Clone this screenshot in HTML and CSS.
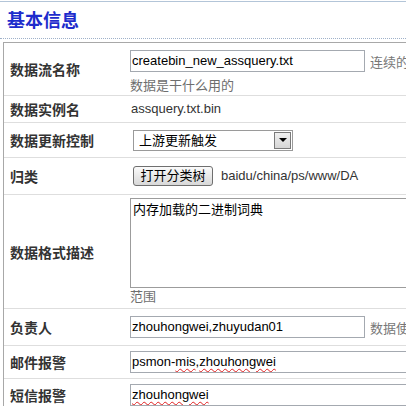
FILE: index.html
```html
<!DOCTYPE html>
<html lang="zh">
<head>
<meta charset="utf-8">
<title>基本信息</title>
<link rel="stylesheet" href="styles.css">
</head>
<body>
<div class="page">
  <div class="head"><h2 class="title">基本信息</h2></div>
  <div class="form">
    <div class="row r1">
      <div class="label">数据流名称</div>
      <div class="value top">
        <div class="line"><span class="field w235">createbin_new_assquery.txt</span><span class="note">连续的字符串</span></div>
        <div class="hint gap">数据是干什么用的</div>
      </div>
    </div>
    <div class="row r2">
      <div class="label">数据实例名</div>
      <div class="value"><span class="plain">assquery.txt.bin</span></div>
    </div>
    <div class="row r3">
      <div class="label">数据更新控制</div>
      <div class="value">
        <div class="select"><span class="sel-text">上游更新触发</span><span class="sel-btn"><span class="tri"></span></span></div>
      </div>
    </div>
    <div class="row r4">
      <div class="label">归类</div>
      <div class="value">
        <div class="line"><span class="btn">打开分类树</span><span class="plain path">baidu/china/ps/www/DA</span></div>
      </div>
    </div>
    <div class="row r5">
      <div class="label">数据格式描述</div>
      <div class="value">
        <div class="textarea">内存加载的二进制词典</div>
        <div class="hint">范围</div>
      </div>
    </div>
    <div class="row r6">
      <div class="label">负责人</div>
      <div class="value">
        <div class="line"><span class="field w235">zhouhongwei,zhuyudan01</span><span class="note">数据使用者</span></div>
      </div>
    </div>
    <div class="row r7">
      <div class="label">邮件报警</div>
      <div class="value">
        <span class="field wide">psmon-<span class="spell">mis</span>,<span class="spell">zhouhongwei</span></span>
      </div>
    </div>
    <div class="row r8">
      <div class="label">短信报警</div>
      <div class="value">
        <span class="field wide"><span class="spell">zhouhongwei</span></span>
      </div>
    </div>
  </div>
</div>
</body>
</html>
```

FILE: styles.css
```css
* { box-sizing: border-box; }
html, body { margin: 0; padding: 0; background: #fff; }
body {
  width: 406px;
  height: 406px;
  overflow: hidden;
  font-family: "Liberation Sans", "Noto Sans CJK SC", sans-serif;
  font-size: 13px;
  color: #000;
}
.page { width: 720px; }
.head {
  margin-top: 1px;
  height: 38px;
  border-top: 1px solid #b3c5d8;
  border-bottom: 1px dotted #9fb1c9;
  padding: 1px 0 0 7px;
  display: flex;
  align-items: center;
}
.title {
  margin: 0;
  font-size: 18px;
  line-height: 20px;
  font-weight: bold;
  color: #1e2ccc;
}
.form {
  margin: 3px 0 0 3px;
  border-top: 1px solid #a8a8a8;
  border-left: 1px solid #a8a8a8;
}
.row {
  display: flex;
  border-bottom: 1px solid #dedede;
}
.r1 { height: 53px; }
.r2 { height: 27px; }
.r3 { height: 35px; }
.r4 { height: 37px; }
.r5 { height: 114px; }
.r6 { height: 37px; }
.r7 { height: 33px; }
.r8 { height: 33px; }
.label {
  flex: none;
  width: 123px;
  padding-left: 6px;
  display: flex;
  align-items: center;
  font-size: 14px;
  font-weight: bold;
  color: #333;
}
.value {
  flex: 1;
  padding-left: 3px;
  display: flex;
  flex-direction: column;
  justify-content: center;
  align-items: flex-start;
}
.value.top {
  justify-content: flex-start;
  padding-top: 7px;
}
.line {
  display: flex;
  align-items: center;
}
.field {
  display: block;
  height: 22px;
  border: 1px solid #a4a9b0;
  padding-left: 1px;
  line-height: 20px;
  font-size: 13px;
  color: #000;
  white-space: nowrap;
  overflow: hidden;
}
.w235 { width: 235px; }
.wide { width: 420px; }
.note {
  margin-left: 5px;
  color: #777;
  font-size: 13px;
  white-space: nowrap;
}
.hint {
  color: #6e6e6e;
  font-size: 13px;
  line-height: 16px;
  margin-top: 1px;
}
.hint.gap { margin-top: 6px; }
.plain {
  color: #333;
  font-size: 13px;
  line-height: 16px;
  padding-left: 1px;
}
.path { margin-left: 7px; }
.select {
  margin-left: 3px;
  width: 160px;
  height: 21px;
  border: 1px solid #9a9a9a;
  display: flex;
  align-items: stretch;
  background: #fff;
}
.sel-text {
  flex: 1;
  padding-left: 5px;
  line-height: 19px;
  font-size: 13px;
  color: #000;
}
.sel-btn {
  width: 17px;
  margin: 1px;
  border: 1px solid #7a7a7a;
  background: linear-gradient(#f0f0f0, #d6d6d6);
  display: flex;
  align-items: center;
  justify-content: center;
}
.tri {
  width: 0;
  height: 0;
  border-left: 4px solid transparent;
  border-right: 4px solid transparent;
  border-top: 4px solid #000;
}
.btn {
  margin-left: 3px;
  width: 80px;
  height: 20px;
  border: 1px solid #6f6f6f;
  border-radius: 3px;
  background: linear-gradient(#fbfbfb, #e9e9e9 50%, #d8d8d8);
  text-align: center;
  line-height: 18px;
  font-size: 13px;
  color: #000;
}
.textarea {
  width: 420px;
  height: 90px;
  border: 1px solid #9c9c9c;
  padding: 3px 2px;
  line-height: 16px;
  font-size: 13px;
  color: #000;
}
.spell {
  text-decoration: underline wavy #e02020;
  text-decoration-thickness: 1px;
  text-underline-offset: 2px;
}
```
